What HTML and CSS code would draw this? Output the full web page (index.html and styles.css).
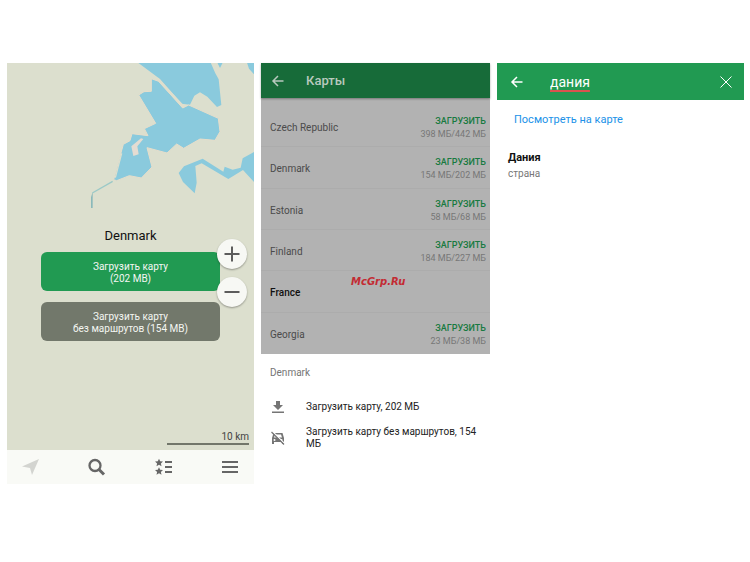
FILE: index.html
```html
<!DOCTYPE html>
<html lang="ru">
<head>
<meta charset="utf-8">
<meta name="viewport" content="width=device-width, initial-scale=1">
<title>Карты</title>
<link rel="stylesheet" href="styles.css">
</head>
<body>
<main class="screens">
  <section class="screen">
    <div class="map">
      <svg class="water" viewBox="21 21 741 450" aria-hidden="true">
        <g fill="#8acadd" stroke="#e6decb" stroke-width="3" stroke-linejoin="round">
          <path d="M414 20 480 69 545 143 570 146 583 119 600 109 622 122 651 153 664 147 656 70 646 52 632 20Z" stroke="none"/>
          <path d="M454 68 476 76 548 156 566 147 655 187 660 227 645 253 600 249 551 277 530 264 501 291 441 275 456 333 424 366 388 359 350 374 341 371 370 265 390 254 396 233 444 239 433 218 467 202 416 117 432 107 454 106Z"/>
          <path d="M741 20H762V55L747 38ZM652 20H668L660 36Z" stroke="none"/>
          <path d="M536 351 552 331 608 308 670 347 674 332 698 341 722 335 728 307 762 288V378L729 342 685 369 605 322 586 330 590 380 584 412 549 378Z" stroke="none"/>
        </g>
        <path d="M472 68 552 154" stroke="#e0decc" stroke-width="7"/>
        <path d="M346 365 365 292" stroke="#dcdfce" stroke-width="4"/>
        <path d="M338 376 277 411" fill="none" stroke="#9bc9c7" stroke-width="4"/>
        <path d="M277 411 273 424 273 456 278 456 278 411Z" fill="#8ab9ba"/>
        <path d="M394 271 423 247 430 249 412 271 416 295 400 300Z" fill="#e4dcd2"/>
      </svg>
      <div class="offer">
        <h1 class="place">Denmark</h1>
        <button class="load primary">Загрузить карту<br>(202 MB)</button>
        <button class="load">Загрузить карту<br>без маршрутов (154 MB)</button>
        <div class="zoom">
          <button aria-label="Приблизить"><svg viewBox="0 0 30 30"><path d="M15 7.500V22.500M7.500 15H22.500"/></svg></button>
          <button aria-label="Отдалить"><svg viewBox="0 0 30 30"><path d="M7.500 15H22.500"/></svg></button>
        </div>
      </div>
      <div class="scale">10 km</div>
    </div>
    <nav class="tabs">
      <button aria-label="Моё положение"><svg viewBox="0 0 24 24"><path d="M20 4 3 11.500 11 13 13 20Z" fill="#d3d4d0"/></svg></button>
      <button aria-label="Поиск"><svg viewBox="0 0 24 24" fill="none" stroke="#666" stroke-width="2.300"><circle cx="10" cy="10.500" r="5.500"/><path d="M14 14.500 19 19.500" stroke-width="3"/></svg></button>
      <button aria-label="Метки"><svg viewBox="0 0 24 24"><path d="M7 3.700 8.200 6.300 11 6.600 8.900 8.500 9.500 11.200 7 9.800 4.500 11.200 5.100 8.500 3 6.600 5.800 6.300ZM7 12.200 8.200 14.800 11 15.100 8.900 17 9.500 19.700 7 18.300 4.500 19.700 5.100 17 3 15.100 5.800 14.800Z" fill="#666"/><path d="M13 7H20M13 12H20M13 17H20" stroke="#666" stroke-width="2"/></svg></button>
      <button aria-label="Меню"><svg viewBox="0 0 24 24" stroke="#666" stroke-width="2"><path d="M4 7H20M4 12H20M4 17H20"/></svg></button>
    </nav>
  </section>

  <section class="screen">
    <div class="dimmed">
      <header class="bar dark">
        <button aria-label="Назад"><svg viewBox="0 0 16 16"><path d="M13.500 8H3M8 3 3 8 8 13"/></svg></button>
        <h2>Карты</h2>
      </header>
      <ul class="countries">
        <li><span>Czech Republic</span><div><button>ЗАГРУЗИТЬ</button><small>398 МБ/442 МБ</small></div></li>
        <li><span>Denmark</span><div><button>ЗАГРУЗИТЬ</button><small>154 МБ/202 МБ</small></div></li>
        <li><span>Estonia</span><div><button>ЗАГРУЗИТЬ</button><small>58 МБ/68 МБ</small></div></li>
        <li><span>Finland</span><div><button>ЗАГРУЗИТЬ</button><small>184 МБ/227 МБ</small></div></li>
        <li class="current"><span>France</span></li>
        <li><span>Georgia</span><div><button>ЗАГРУЗИТЬ</button><small>23 МБ/38 МБ</small></div></li>
      </ul>
      <span class="mark">McGrp.Ru</span>
    </div>
    <div class="sheet">
      <h3>Denmark</h3>
      <button class="action">
        <svg viewBox="0 0 16 16"><path d="M6 2H10V6H13L8 11 3 6H6ZM2 12.500H14V14H2Z" fill="#757575"/></svg>
        <span>Загрузить карту, 202 МБ</span>
      </button>
      <button class="action">
        <svg viewBox="0 0 16 16"><path fill="#757575" fill-rule="evenodd" d="M3.500 3H12.500L14 8V14H12V12H4V14H2V8ZM5 4.500 4 7.500H12L11 4.500ZM4.500 9A1 1 0 1 0 4.500 11 1 1 0 1 0 4.500 9ZM11.500 9A1 1 0 1 0 11.500 11 1 1 0 1 0 11.500 9Z"/><path d="M3 2 15 14" stroke="#fff" stroke-width="1.200"/><path d="M1.500 2 14 14.500" stroke="#757575" stroke-width="1.300"/></svg>
        <span>Загрузить карту без маршрутов, 154 МБ</span>
      </button>
    </div>
  </section>

  <section class="screen">
    <header class="bar search">
      <button aria-label="Назад"><svg viewBox="0 0 16 16"><path d="M13.500 8H3M8 3 3 8 8 13"/></svg></button>
      <input type="text" value="дания" aria-label="Поиск" spellcheck="false">
      <button aria-label="Очистить"><svg viewBox="0 0 16 16"><path d="M2.500 2.500 13.500 13.500M13.500 2.500 2.500 13.500" class="thin"/></svg></button>
    </header>
    <a class="show" href="#map">Посмотреть на карте</a>
    <div class="result">
      <h3>Дания</h3>
      <p>страна</p>
    </div>
  </section>
</main>
</body>
</html>
```
FILE: styles.css
```css
* { box-sizing: border-box; }
body { margin: 0; background: #fff; font-family: Roboto, "Liberation Sans", sans-serif; font-size: 10px; line-height: 12px; color: #222; }
h1, h2, h3, p, ul { margin: 0; padding: 0; font-weight: 400; }
button { border: 0; padding: 0; background: none; font: inherit; color: inherit; }
svg { display: block; }

.screens { display: grid; grid-template-columns: 247fr 229fr 247fr; gap: 7px; padding: 63px 6px 0 7px; align-items: start; }
.screen { min-width: 0; }

.map { display: flex; flex-direction: column; background: #dcdfce; }
.water { width: 100%; }
.offer { position: relative; display: flex; flex-direction: column; gap: 11px; padding: 15px 34px 0; }
.place { font-size: 13px; line-height: 16px; text-align: center; color: #111; margin-bottom: -3px; }
.load { height: 39px; padding-top: 2px; border-radius: 6px; background: #72786b; color: #f4f6f2; }
.primary { background: #219a52; }
.zoom { position: absolute; right: 7px; top: 26px; display: grid; gap: 8px; }
.zoom button { width: 30px; height: 30px; border-radius: 50%; background: #f7f8f4; box-shadow: 0 1px 2px #0005; }
.zoom path { stroke: #5c5c5c; stroke-width: 2; }
.scale { align-self: flex-end; width: 82px; margin: 90px 5px 5px 0; border-bottom: 2px solid #72766a; text-align: right; color: #444; }
.tabs { display: flex; justify-content: space-between; align-items: center; height: 34px; padding: 0 12px; background: #f9faf6; }
.tabs svg { width: 24px; height: 24px; }

.bar { display: flex; align-items: center; height: 35px; padding: 0 10px 0 9px; gap: 20px; color: #fff; }
.bar svg { width: 16px; height: 16px; }
.bar path { fill: none; stroke: currentColor; stroke-width: 1.5; }
.bar .thin { stroke-width: 1; }
.bar h2 { font-size: 13px; font-weight: 500; line-height: 16px; }
.dark { background: #176b39; color: #b9c9be; box-shadow: 0 1px 2px #0005; }
.dimmed { position: relative; background: #b2b2b2; }
.countries { display: grid; grid-template-rows: repeat(6, 1fr); height: 256px; padding-top: 8px; list-style: none; }
.countries li { display: flex; align-items: center; justify-content: space-between; padding: 4px 4px 0 9px; border-bottom: 1px solid #acacac; color: #4b4b4b; }
.countries li:last-child { border: 0; }
.countries div { display: grid; justify-items: end; line-height: 13px; }
.countries button { font-size: 9px; font-weight: 500; color: #177a40; }
.countries small { font-size: 9px; color: #777; }
.countries .current { color: #111; font-weight: 500; }
.mark { position: absolute; left: 90px; top: 213px; font: italic bold 10px/12px "DejaVu Sans", sans-serif; color: #c32b33; }
.sheet { padding: 13px 4px 0 9px; }
.sheet h3 { font-size: 10px; color: #757575; margin-bottom: 18px; }
.action { display: flex; align-items: center; gap: 20px; width: 100%; min-height: 20px; margin-bottom: 9px; text-align: left; }
.action svg { flex: none; width: 16px; height: 16px; }

.search { height: 37px; padding-left: 12px; background: #219a52; gap: 25px; }
.search input { flex: 1; min-width: 0; border: 0; padding: 0; background: none; outline: 0; color: #fff; font: 14px/20px Roboto, sans-serif; text-decoration: underline #d9534f 2px; text-underline-offset: 3px; }
.show { display: block; padding: 14px 17px; font-size: 11px; color: #2091e8; text-decoration: none; }
.result { padding: 12px 11px; }
.result h3 { font-size: 11px; font-weight: 700; color: #111; }
.result p { margin-top: 4px; color: #777; }
```
